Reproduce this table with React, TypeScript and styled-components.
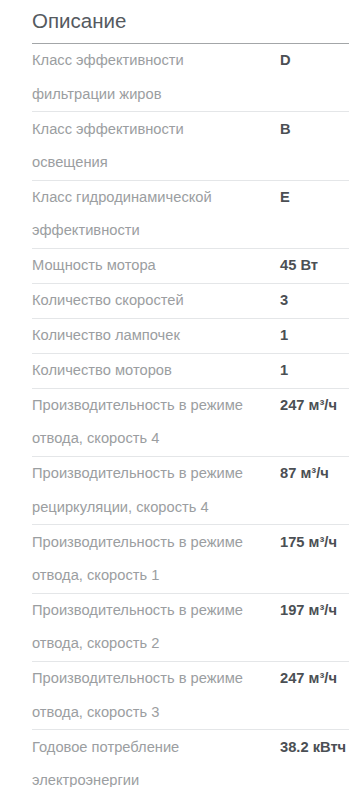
import React from "react";
import styled, { createGlobalStyle } from "styled-components";

const Global = createGlobalStyle`
  html, body { margin: 0; padding: 0; background: #ffffff; }
  body { font-family: "Liberation Sans", Arial, sans-serif; overflow: hidden; }
`;

const Page = styled.div`
  padding: 7px 0 0 32px;
`;

const Title = styled.h2`
  margin: 0;
  font-size: 20.5px;
  font-weight: 400;
  line-height: 28px;
  padding-bottom: 8px;
  color: #555a5f;
  border-bottom: 1px solid #a3a6a8;
`;

const Table = styled.div`
  display: flex;
  flex-direction: column;
`;

const Row = styled.div`
  display: grid;
  grid-template-columns: 226px 1fr;
  column-gap: 22px;
  padding: 0.35px 0;
  border-bottom: 1px solid #e4e6e8;
  font-size: 14.7px;
  line-height: 33.3px;
`;

const Label = styled.div`
  color: #9b9ea1;
`;

const Value = styled.div`
  color: #4b4f54;
  font-weight: 700;
  white-space: nowrap;
`;

const Sup = styled.span`
  font-size: 1em;
`;

const rows: [string, React.ReactNode][] = [
  ["Класс эффективности фильтрации жиров", "D"],
  ["Класс эффективности освещения", "B"],
  ["Класс гидродинамической эффективности", "E"],
  ["Мощность мотора", "45 Вт"],
  ["Количество скоростей", "3"],
  ["Количество лампочек", "1"],
  ["Количество моторов", "1"],
  ["Производительность в режиме отвода, скорость 4", <>247 м<Sup>³</Sup>/ч</>],
  ["Производительность в режиме рециркуляции, скорость 4", <>87 м<Sup>³</Sup>/ч</>],
  ["Производительность в режиме отвода, скорость 1", <>175 м<Sup>³</Sup>/ч</>],
  ["Производительность в режиме отвода, скорость 2", <>197 м<Sup>³</Sup>/ч</>],
  ["Производительность в режиме отвода, скорость 3", <>247 м<Sup>³</Sup>/ч</>],
  ["Годовое потребление электроэнергии", "38.2 кВтч"],
];

export default function App() {
  return (
    <>
      <Global />
      <Page>
        <Title>Описание</Title>
        <Table>
          {rows.map(([l, v], i) => (
            <Row key={i}>
              <Label>{l}</Label>
              <Value>{v}</Value>
            </Row>
          ))}
        </Table>
      </Page>
    </>
  );
}
